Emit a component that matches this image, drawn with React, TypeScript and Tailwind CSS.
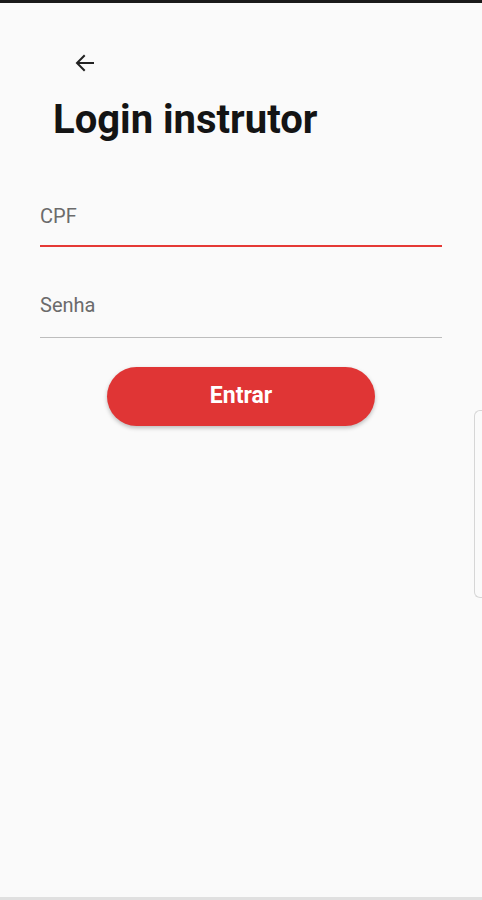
import React from "react"

export default function App() {
  return (
    <div
      className="relative w-[482px] h-[900px] overflow-hidden bg-[#fafafa]"
      style={{ fontFamily: "Roboto, 'Noto Sans', sans-serif" }}
    >
      <div className="h-[3px] bg-[#1a1a1a]" />

      <div className="pl-[73px] pt-[48px] h-[75px]">
        <svg width="24" height="24" viewBox="0 0 24 24" fill="none" stroke="#222" strokeWidth="2" strokeLinecap="square">
          <path d="M20 12H5" />
          <path d="M11 5l-7 7 7 7" />
        </svg>
      </div>

      <h1 className="pl-[53px] mt-[18px] text-[40px] leading-[48px] font-bold text-[#141414]">
        Login instrutor
      </h1>

      <div className="mx-[40px] mt-[52px]">
        <div className="pt-[8px] pb-[15px] border-b-2 border-[#e53935]">
          <span className="text-[20px] leading-[24px] text-[#6b6b6b]">CPF</span>
        </div>
        <div className="mt-[46px] pb-[18px] border-b border-[#bdbdbd]">
          <span className="text-[20px] leading-[24px] text-[#6b6b6b]">Senha</span>
        </div>
      </div>

      <div className="flex justify-center mt-[29px]">
        <button className="w-[268px] h-[59px] rounded-full bg-[#e03535] text-white text-[23px] font-bold shadow-[0_2px_4px_rgba(0,0,0,0.25)]">
          Entrar
        </button>
      </div>

      <div className="absolute right-0 top-[410px] w-[8px] h-[188px] rounded-l-[6px] border border-r-0 border-[#d6d6d6] bg-[#fafafa]" />
      <div className="absolute left-0 right-0 bottom-0 h-[3px] bg-[#e0e0e0]" />
    </div>
  )
}
